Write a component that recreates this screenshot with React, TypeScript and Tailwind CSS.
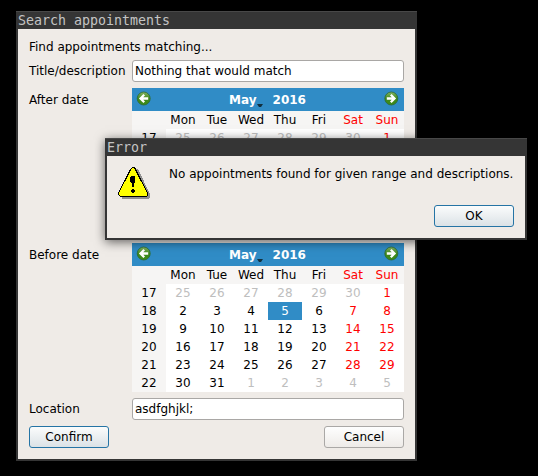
import type { ReactNode } from 'react';

const DAYS = ['Mon', 'Tue', 'Wed', 'Thu', 'Fri', 'Sat', 'Sun'];
const WEEKS = [
  { week: 17, days: [25, 26, 27, 28, 29, 30, 1] },
  { week: 18, days: [2, 3, 4, 5, 6, 7, 8] },
  { week: 19, days: [9, 10, 11, 12, 13, 14, 15] },
  { week: 20, days: [16, 17, 18, 19, 20, 21, 22] },
  { week: 21, days: [23, 24, 25, 26, 27, 28, 29] },
  { week: 22, days: [30, 31, 1, 2, 3, 4, 5] },
];

function dayClass(row: number, col: number, day: number) {
  if ((row === 0 && day > 20) || (row === 5 && day < 10)) return 'text-[#bebebe]';
  if (row === 1 && day === 5) return 'bg-[#308cc6] text-white';
  return col > 4 ? 'text-[#ff0000]' : 'text-black';
}

function ArrowButton({ flip = false }: { flip?: boolean }) {
  return (
    <button className="mb-[2px] h-[15px] w-[15px]">
      <svg width="15" height="15" viewBox="0 0 15 15" className={flip ? '-scale-x-100' : ''}>
        <defs>
          <linearGradient id="orb" x1="0" y1="0" x2="0" y2="1">
            <stop offset="0" stopColor="#86b565" />
            <stop offset="0.5" stopColor="#3f8a1c" />
            <stop offset="1" stopColor="#3c8a18" />
          </linearGradient>
        </defs>
        <circle cx="7.7" cy="7.5" r="6.5" fill="url(#orb)" stroke="#2d6932" strokeWidth="0.8" />
        <path d="M12.2 7.5H5M8.2 3.8L4.5 7.5L8.2 11.2" fill="none" stroke="#fff" strokeWidth="2.3" />
      </svg>
    </button>
  );
}

// `weeks` limits the rows to those not covered by another window.
function Calendar({ weeks = 6 }: { weeks?: number }) {
  return (
    <div className="h-[149px] w-[272px] bg-white">
      <div className="flex h-[23px] items-center justify-between bg-[#308cc6] pl-[4px] pr-[5px]">
        <ArrowButton />
        <div className="flex items-center font-bold text-white">
          <span>May</span>
          <svg width="6" height="3" viewBox="0 0 6 3" className="mt-[11px]">
            <path d="M0 0H6L4 3H2Z" fill="#12303f" />
          </svg>
          <span className="ml-[10px]">2016</span>
        </div>
        <ArrowButton flip />
      </div>
      <div className="grid h-[18px] grid-cols-8 bg-[#f6f5f4] text-center leading-[18px]">
        <span />
        {DAYS.map((d, i) => (
          <span key={d} className={i > 4 ? 'text-[#ff0000]' : ''}>{d}</span>
        ))}
      </div>
      {WEEKS.slice(0, weeks).map((w, r) => (
        <div key={w.week} className="grid h-[18px] grid-cols-8 text-center leading-[18px]">
          <span className="bg-[#f6f5f4]">{w.week}</span>
          {w.days.map((d, c) => (
            <span key={c} className={dayClass(r, c, d)}>{d}</span>
          ))}
        </div>
      ))}
    </div>
  );
}

function Field({ value }: { value: string }) {
  return (
    <div className="h-[22px] w-[272px] rounded-[3px] border border-[#a9a7a5] bg-white pl-[2px] leading-[20px]">
      {value}
    </div>
  );
}

function PushButton({ label, primary = false }: { label: string; primary?: boolean }) {
  const tone = primary
    ? 'border-[#2574a5] from-[#fbfcfc] to-[#dbe2e6]'
    : 'border-[#aaa8a6] from-[#fefefe] to-[#eeebe8]';
  return (
    <button className={`h-[22px] w-[80px] rounded-[3px] border bg-linear-to-b leading-[20px] ${tone}`}>
      {label}
    </button>
  );
}

function TitleBar({ children }: { children: ReactNode }) {
  return (
    <div className="h-[18px] border-t border-[#484848] bg-[#353535] pl-[2px] font-['DejaVu_Sans_Mono',monospace] text-[13.29px] leading-[17px] text-[#c4c4c4]">
      {children}
    </div>
  );
}

function WarningIcon() {
  return (
    <svg width="32" height="32" viewBox="0 0 32 32" shapeRendering="crispEdges">
      <path d="M16 2H19L21 4L32 27V30L30 32H4V29Z" fill="#919191" />
      <path d="M14 0H16L18 2L30 26V28L28 30H2L0 28V26L12 2Z" fill="#000" />
      <path d="M14 1H16L17 3L29 26V28L28 29H2L1 28V26L13 3Z" fill="#ff0" />
      <path d="M13 9H16L17 10V15L16 17V20H14V17L12 15V10Z" fill="#000" />
      <path d="M14 22H16V23H17V25H16V26H14V25H13V23H14Z" fill="#000" />
    </svg>
  );
}

export default function App() {
  return (
    <div className="relative h-[476px] w-[538px] overflow-hidden bg-black pl-[16px] pt-[11px] font-['DejaVu_Sans',sans-serif] text-[12px] text-black">
      <section className="h-[450px] w-[401px] bg-[#353535]">
        <TitleBar>Search appointments</TitleBar>
        <div className="mx-[2px] flex h-[430px] flex-col bg-[#efebe7] px-[11px] pt-[11px]">
          <p className="h-[20px] leading-[14px]">Find appointments matching...</p>
          <div className="grid grid-cols-[103px_272px] gap-y-[6px]">
            <label className="leading-[22px]">Title/description</label>
            <Field value="Nothing that would match" />
            <label className="leading-[24px]">After date</label>
            <Calendar weeks={1} />
            <label className="leading-[24px]">Before date</label>
            <Calendar />
            <label className="leading-[22px]">Location</label>
            <Field value="asdfghjkl;" />
          </div>
          <div className="mt-[6px] flex justify-between">
            <PushButton label="Confirm" primary />
            <PushButton label="Cancel" />
          </div>
        </div>
      </section>

      <section
        role="dialog"
        className="absolute left-[105px] top-[138px] h-[102px] w-[422px] bg-[#353535] shadow-[0_2px_10px_rgba(0,0,0,0.6)]"
      >
        <TitleBar>Error</TitleBar>
        <div className="mx-[2px] flex h-[82px] flex-col justify-between bg-[#efebe7] px-[11px] pb-[11px] pt-[11px]">
          <div className="flex h-[32px] gap-[19px]">
            <WarningIcon />
            <p className="whitespace-nowrap leading-[14px]">No appointments found for given range and descriptions.</p>
          </div>
          <div className="flex h-[22px] justify-end">
            <PushButton label="OK" primary />
          </div>
        </div>
      </section>
    </div>
  );
}
